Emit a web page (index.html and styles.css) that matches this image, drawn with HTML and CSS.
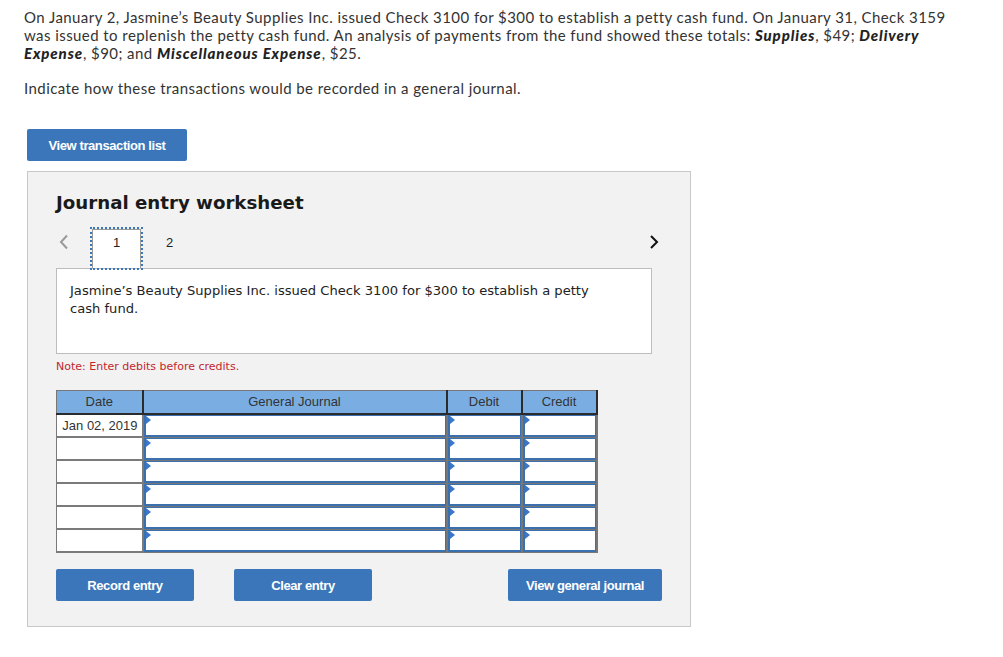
FILE: index.html
```html
<!DOCTYPE html>
<html>
<head>
<meta charset="utf-8">
<link rel="stylesheet" href="styles.css">
</head>
<body>
<div class="page">
  <p class="intro">On January 2, Jasmine’s Beauty Supplies Inc. issued Check 3100 for $300 to establish a petty cash fund. On January 31, Check 3159 was issued to replenish the petty cash fund. An analysis of payments from the fund showed these totals: <b>Supplies</b>, $49; <b>Delivery Expense</b>, $90; and <b>Miscellaneous Expense</b>, $25.</p>
  <p class="intro">Indicate how these transactions would be recorded in a general journal.</p>

  <button class="btn btn-list">View transaction list</button>

  <div class="panel">
    <h2 class="title">Journal entry worksheet</h2>
    <div class="tabs">
      <span class="arrow prev"><svg width="10" height="16" viewBox="0 0 10 16"><path d="M8 1.5 L2 8 L8 14.5" fill="none" stroke="#9a9a9a" stroke-width="2"/></svg></span>
      <span class="tab active"><span class="tab-inner">1</span></span>
      <span class="tab">2</span>
      <span class="spacer"></span>
      <span class="arrow next"><svg width="10" height="16" viewBox="0 0 10 16"><path d="M2 2 L8 8 L2 14" fill="none" stroke="#111" stroke-width="2"/></svg></span>
    </div>
    <div class="desc">Jasmine’s Beauty Supplies Inc. issued Check 3100 for $300 to establish a petty cash fund.</div>
    <div class="note">Note: Enter debits before credits.</div>

    <table class="journal">
      <thead>
        <tr><th class="c-date">Date</th><th class="c-gj">General Journal</th><th class="c-dr">Debit</th><th class="c-cr">Credit</th></tr>
      </thead>
      <tbody>
        <tr><td class="date">Jan 02, 2019</td><td class="inp"><div class="box"></div></td><td class="inp"><div class="box"></div></td><td class="inp"><div class="box"></div></td></tr>
        <tr><td class="date"></td><td class="inp"><div class="box"></div></td><td class="inp"><div class="box"></div></td><td class="inp"><div class="box"></div></td></tr>
        <tr><td class="date"></td><td class="inp"><div class="box"></div></td><td class="inp"><div class="box"></div></td><td class="inp"><div class="box"></div></td></tr>
        <tr><td class="date"></td><td class="inp"><div class="box"></div></td><td class="inp"><div class="box"></div></td><td class="inp"><div class="box"></div></td></tr>
        <tr><td class="date"></td><td class="inp"><div class="box"></div></td><td class="inp"><div class="box"></div></td><td class="inp"><div class="box"></div></td></tr>
        <tr><td class="date"></td><td class="inp"><div class="box"></div></td><td class="inp"><div class="box"></div></td><td class="inp"><div class="box"></div></td></tr>
      </tbody>
    </table>

    <div class="actions">
      <button class="btn btn-record">Record entry</button>
      <button class="btn btn-clear">Clear entry</button>
      <span class="spacer"></span>
      <button class="btn btn-view">View general journal</button>
    </div>
  </div>
</div>
</body>
</html>
```

FILE: styles.css
```css
* { box-sizing: border-box; }
html, body { margin: 0; padding: 0; background: #fff; }
body { font-family: "Lato", "Liberation Sans", sans-serif; color: #333; }

.page { padding: 8px 24px 0 24px; }

.intro {
  margin: 0 0 17px 0;
  font-family: "Lato", sans-serif;
  font-size: 15px;
  letter-spacing: 0.43px;
  line-height: 18px;
  color: #333;
  width: 932px;
}
.intro b { font-style: italic; font-weight: 900; color: #222; letter-spacing: 0.9px; }

.btn {
  display: inline-flex;
  align-items: center;
  justify-content: center;
  border: none;
  border-radius: 2px;
  background: #3a76b9;
  color: #fff;
  font-family: "Liberation Sans Narrow", "Liberation Sans", Arial, sans-serif;
  font-weight: bold;
  font-size: 13px;
  letter-spacing: -0.4px;
  height: 32px;
  padding: 0;
  margin: 0;
}
.btn-list { width: 160px; margin: 15px 0 10px 3px; }

.panel {
  margin-left: 3px;
  width: 664px;
  height: 456px;
  background: #f2f2f2;
  border: 1px solid #c8c8c8;
  padding: 0 0 0 28px;
}

.title {
  margin: 19px 0 0 0;
  font-family: "DejaVu Sans", Verdana, "Bitstream Vera Sans", sans-serif;
  font-size: 18.2px;
  font-weight: bold;
  color: #1a1a1a;
  line-height: 24px;
}

.tabs {
  display: flex;
  align-items: flex-start;
  height: 43px;
  margin-top: 12px;
  width: 603px;
  position: relative;
  z-index: 2;
}
.arrow { display: flex; align-items: center; height: 16px; margin-top: 7px; }
.prev { margin-left: 3px; width: 31px; }
.tab {
  width: 53px;
  height: 43px;
  display: flex;
  align-items: flex-start;
  justify-content: center;
  padding-top: 8px;
  font-family: "Liberation Sans", Arial, sans-serif;
  font-size: 13px;
  line-height: 16px;
  color: #222;
}
.tab.active {
  border: 2px dotted #3a76b9;
  padding: 0;
}
.tab-inner {
  width: 100%;
  height: 100%;
  background: #fff;
  border: 1px solid #999;
  border-bottom: none;
  display: flex;
  align-items: flex-start;
  justify-content: center;
  padding-top: 5px;
}
.spacer { flex: 1; }

.desc {
  margin-top: -2px;
  width: 596px;
  height: 86px;
  background: #fff;
  border: 1px solid #bdbdbd;
  padding: 13px 40px 0 13px;
  font-family: "DejaVu Sans", Verdana, "Bitstream Vera Sans", sans-serif;
  font-size: 13.1px;
  line-height: 18px;
  color: #222;
  position: relative;
  z-index: 1;
}

.note {
  margin-top: 6px;
  font-family: "DejaVu Sans", Verdana, "Bitstream Vera Sans", sans-serif;
  font-size: 11px;
  color: #c1272d;
  line-height: 14px;
}

.journal {
  margin-top: 16px;
  border-collapse: collapse;
  font-family: "Liberation Sans", Arial, sans-serif;
  font-size: 13px;
  color: #333;
}
.journal th {
  background: #7aaee3;
  height: 23px;
  font-weight: normal;
  color: #333;
  border: 2px solid #2b2b2b;
  border-top: 1px solid #777;
  padding: 0;
  text-align: center;
}
.journal th.c-date { border-left: 1px solid #777; width: 86px; }
.journal th.c-gj { width: 304px; }
.journal th.c-dr { width: 75px; }
.journal th.c-cr { width: 75px; }
.journal td {
  height: 23px;
  padding: 0;
}
.journal td.date {
  border: 2px solid #7a7a7a;
  border-left: 1px solid #7a7a7a;
  border-top: none;
  background: #fff;
  text-align: right;
  padding-right: 4px;
  font-size: 13px;
  color: #333;
}
.journal td.inp {
  border-right: 2px solid #777;
  border-bottom: 1px solid #777;
  background: #fff;
}
.box {
  height: 22px;
  border: 2px solid #3a70ad;
  border-right-width: 1px;
  border-top-width: 1px;
  position: relative;
  background: #fff;
}
.box::before {
  content: "";
  position: absolute;
  left: 0;
  top: 0;
  width: 0;
  height: 0;
  border-left: 5px solid #3a76c9;
  border-top: 4px solid transparent;
  border-bottom: 4px solid transparent;
}

.actions {
  display: flex;
  margin-top: 16px;
  width: 606px;
}
.btn-record { width: 138px; }
.btn-clear { width: 138px; margin-left: 40px; }
.btn-view { width: 154px; }
```
